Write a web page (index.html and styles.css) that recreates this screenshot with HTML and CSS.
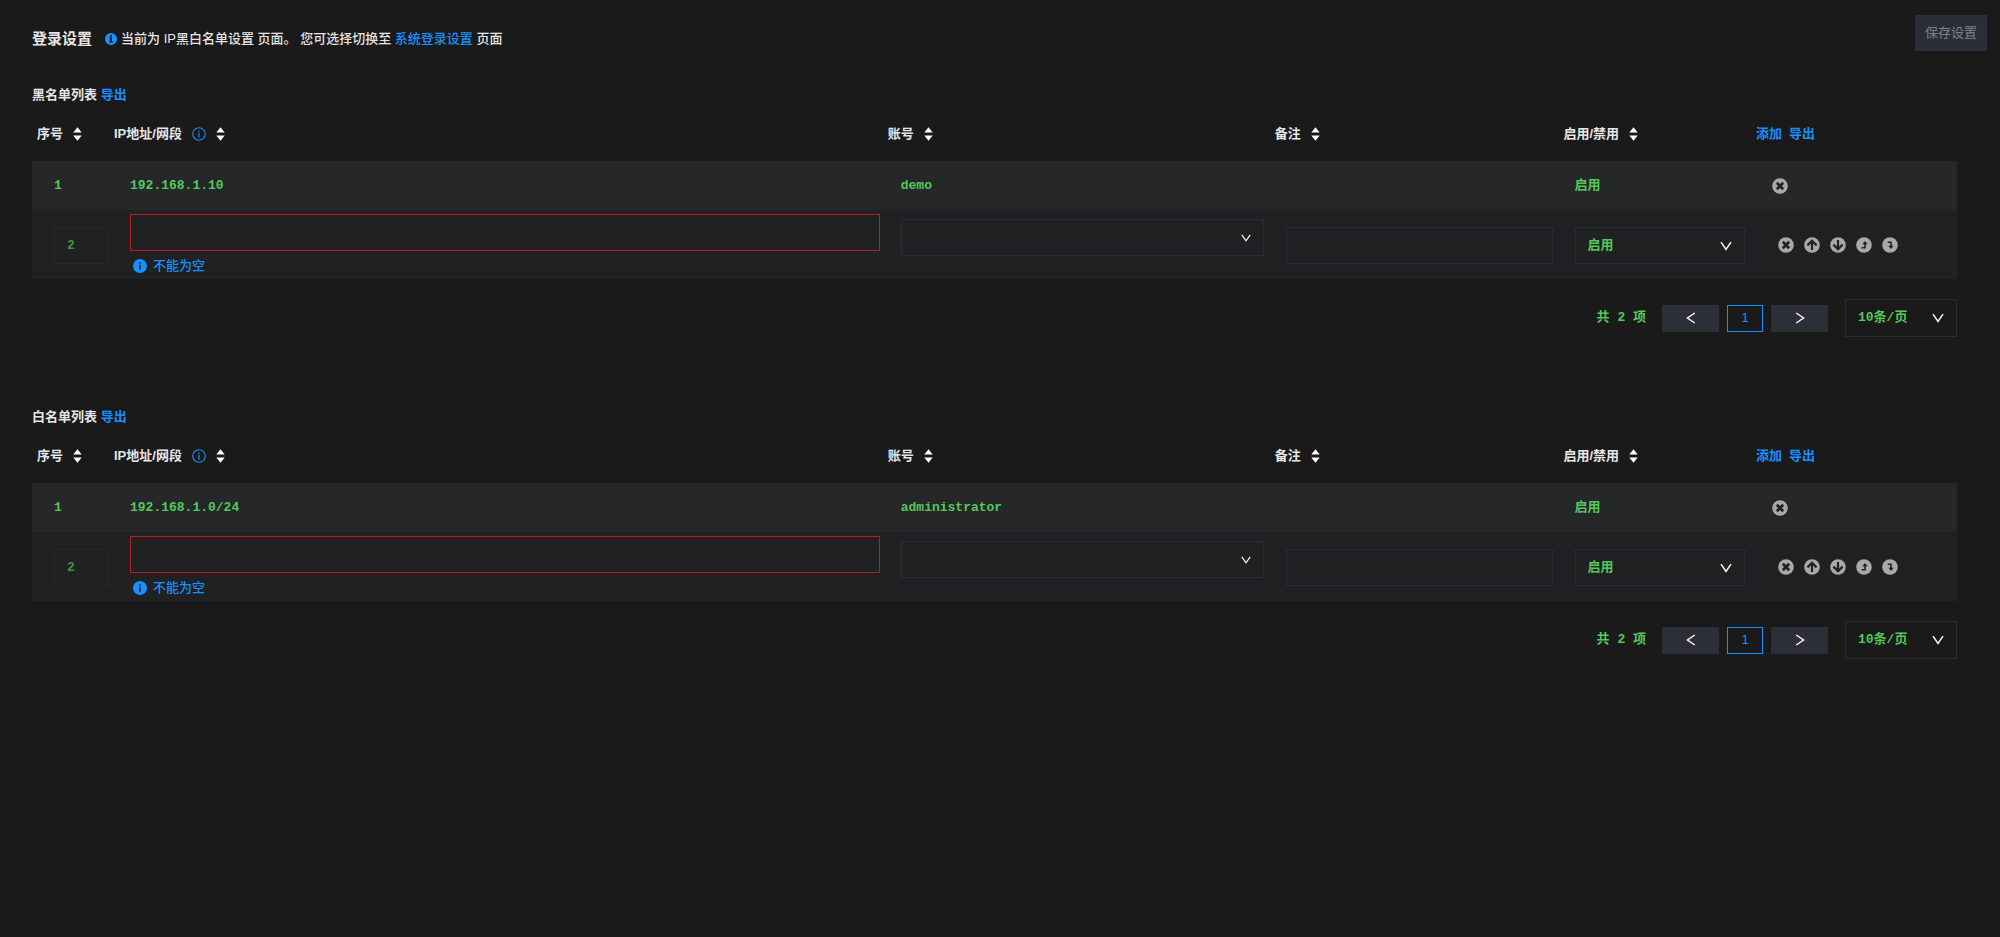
FILE: index.html
```
<!DOCTYPE html>
<html lang="zh-CN">
<head>
  <meta charset="UTF-8" />
  <meta name="viewport" content="width=device-width, initial-scale=1.0"/>
  <title>登录设置</title>
  <link rel="stylesheet" href="styles.css">
</head>
<body>
  <!-- Shared icons -->
  <svg class="icon-defs" aria-hidden="true">
    <symbol id="sort" viewBox="0 0 9 14">
      <path fill="currentColor" d="M4.5 0.3 8.7 5.6H0.3zM0.3 8.4H8.7L4.5 13.7z"/>
    </symbol>
    <symbol id="info" viewBox="0 0 14 14">
      <circle cx="7" cy="7" r="6.3" fill="none" stroke="currentColor" stroke-width="1.1"/>
      <path fill="currentColor" d="M6.4 3.7h1.2v1.2H6.4zM6.4 6h1.2v4.4H6.4z"/>
    </symbol>
    <symbol id="info-fill" viewBox="0 0 14 14">
      <circle cx="7" cy="7" r="7" fill="currentColor"/>
      <path fill="#202123" d="M6.3 3.2h1.5v1.5H6.3zM6.3 5.8h1.5v5H6.3z"/>
    </symbol>
    <symbol id="info-bold" viewBox="0 0 12 12">
      <circle cx="6" cy="6" r="6" fill="currentColor"/>
      <path fill="#1a1a1a" d="M5 2h2v1.7H5zM4.3 4.6H7v3.6h.8v1.4H4.3V8.2H5V6h-.7z"/>
    </symbol>
    <symbol id="down" viewBox="0 0 12 12">
      <path fill="none" stroke="currentColor" stroke-width="1.4" d="M1 2.2 6 9.4 11 2.2"/>
    </symbol>
    <symbol id="left" viewBox="0 0 12 12">
      <path fill="none" stroke="currentColor" stroke-width="1.4" d="M9.8 1 2.4 6l7.4 5"/>
    </symbol>
    <symbol id="right" viewBox="0 0 12 12">
      <path fill="none" stroke="currentColor" stroke-width="1.4" d="M2.2 1 9.6 6l-7.4 5"/>
    </symbol>
    <symbol id="remove" viewBox="0 0 16 16">
      <circle cx="8" cy="8" r="7.8" fill="#a9a9a9"/>
      <path stroke="#202123" stroke-width="2.7" d="M4.8 4.8l6.4 6.4M11.2 4.8l-6.4 6.4"/>
    </symbol>
    <symbol id="up-circle" viewBox="0 0 16 16">
      <circle cx="8" cy="8" r="7.8" fill="#a9a9a9"/>
      <path fill="none" stroke="#202123" stroke-width="2.2" d="M8 13V4M3.4 8.4 8 3.8l4.6 4.6"/>
    </symbol>
    <symbol id="down-circle" viewBox="0 0 16 16">
      <circle cx="8" cy="8" r="7.8" fill="#a9a9a9"/>
      <path fill="none" stroke="#202123" stroke-width="2.2" d="M8 3v9M3.4 7.6 8 12.2l4.6-4.6"/>
    </symbol>
    <symbol id="top-circle" viewBox="0 0 16 16">
      <circle cx="8" cy="8" r="7.8" fill="#a9a9a9"/>
      <path fill="#202123" d="M9 4l2.7 3.2H9.8v4.3H5.7V9.9h2.5V7.2H6.3z"/>
    </symbol>
    <symbol id="bottom-circle" viewBox="0 0 16 16">
      <circle cx="8" cy="8" r="7.8" fill="#a9a9a9"/>
      <path fill="#202123" d="M9 12l2.7-3.2H9.8V4.5H5.7v1.6h2.5v2.7H6.3z"/>
    </symbol>
  </svg>

  <header class="page-header">
    <div class="page-title">
      <h1>登录设置</h1>
      <p>
        <svg class="icon-sm"><use href="#info-bold"/></svg>
        <span>当前为 IP黑白名单设置 页面。&nbsp;您可选择切换至 <a href="#">系统登录设置</a> 页面</span>
      </p>
    </div>
    <button class="save-btn" type="button" disabled>保存设置</button>
  </header>

  <main>
    <!-- Blacklist -->
    <section class="list">
      <h2>黑名单列表 <a href="#">导出</a></h2>
      <table>
        <colgroup>
          <col class="col-index"><col class="col-ip"><col class="col-account"><col class="col-remark"><col class="col-status"><col class="col-actions">
        </colgroup>
        <thead>
          <tr>
            <th><div class="head">序号 <svg class="sort"><use href="#sort"/></svg></div></th>
            <th><div class="head">IP地址/网段 <svg class="icon"><use href="#info"/></svg><svg class="sort"><use href="#sort"/></svg></div></th>
            <th><div class="head">账号 <svg class="sort"><use href="#sort"/></svg></div></th>
            <th><div class="head">备注 <svg class="sort"><use href="#sort"/></svg></div></th>
            <th><div class="head">启用/禁用 <svg class="sort"><use href="#sort"/></svg></div></th>
            <th><div class="head-links"><a href="#">添加</a><a href="#">导出</a></div></th>
          </tr>
        </thead>
        <tbody>
          <tr class="row-view">
            <td class="cell-index">1</td>
            <td class="cell-ip">192.168.1.10</td>
            <td class="cell-account">demo</td>
            <td class="cell-remark"></td>
            <td class="cell-status">启用</td>
            <td class="cell-actions">
              <div class="actions"><button type="button" aria-label="删除"><svg><use href="#remove"/></svg></button></div>
            </td>
          </tr>
          <tr class="row-edit">
            <td class="cell-index"><input class="field" type="text" value="2" aria-label="序号" disabled></td>
            <td class="cell-ip">
              <input class="field error" type="text" aria-label="IP地址/网段">
              <p class="tip"><svg class="icon"><use href="#info-fill"/></svg>不能为空</p>
            </td>
            <td class="cell-account">
              <div class="select account-select">
                <select class="field" aria-label="账号"><option></option></select>
                <svg class="arrow small"><use href="#down"/></svg>
              </div>
            </td>
            <td class="cell-remark"><input class="field" type="text" aria-label="备注"></td>
            <td class="cell-status">
              <div class="select">
                <select class="field" aria-label="启用/禁用"><option>启用</option><option>禁用</option></select>
                <svg class="arrow"><use href="#down"/></svg>
              </div>
            </td>
            <td class="cell-actions">
              <div class="actions">
                <button type="button" aria-label="删除"><svg><use href="#remove"/></svg></button>
                <button type="button" aria-label="上移"><svg><use href="#up-circle"/></svg></button>
                <button type="button" aria-label="下移"><svg><use href="#down-circle"/></svg></button>
                <button type="button" aria-label="置顶"><svg><use href="#top-circle"/></svg></button>
                <button type="button" aria-label="置底"><svg><use href="#bottom-circle"/></svg></button>
              </div>
            </td>
          </tr>
        </tbody>
      </table>
      <nav class="pagination" aria-label="黑名单分页">
        <span class="total">共 2 项</span>
        <button class="step" type="button" aria-label="上一页"><svg class="icon-sm"><use href="#left"/></svg></button>
        <button class="page" type="button">1</button>
        <button class="step" type="button" aria-label="下一页"><svg class="icon-sm"><use href="#right"/></svg></button>
        <div class="select page-size">
          <select class="field" aria-label="每页条数"><option>10条/页</option><option>20条/页</option></select>
          <svg class="arrow"><use href="#down"/></svg>
        </div>
      </nav>
    </section>

    <!-- Whitelist -->
    <section class="list">
      <h2>白名单列表 <a href="#">导出</a></h2>
      <table>
        <colgroup>
          <col class="col-index"><col class="col-ip"><col class="col-account"><col class="col-remark"><col class="col-status"><col class="col-actions">
        </colgroup>
        <thead>
          <tr>
            <th><div class="head">序号 <svg class="sort"><use href="#sort"/></svg></div></th>
            <th><div class="head">IP地址/网段 <svg class="icon"><use href="#info"/></svg><svg class="sort"><use href="#sort"/></svg></div></th>
            <th><div class="head">账号 <svg class="sort"><use href="#sort"/></svg></div></th>
            <th><div class="head">备注 <svg class="sort"><use href="#sort"/></svg></div></th>
            <th><div class="head">启用/禁用 <svg class="sort"><use href="#sort"/></svg></div></th>
            <th><div class="head-links"><a href="#">添加</a><a href="#">导出</a></div></th>
          </tr>
        </thead>
        <tbody>
          <tr class="row-view">
            <td class="cell-index">1</td>
            <td class="cell-ip">192.168.1.0/24</td>
            <td class="cell-account">administrator</td>
            <td class="cell-remark"></td>
            <td class="cell-status">启用</td>
            <td class="cell-actions">
              <div class="actions"><button type="button" aria-label="删除"><svg><use href="#remove"/></svg></button></div>
            </td>
          </tr>
          <tr class="row-edit">
            <td class="cell-index"><input class="field" type="text" value="2" aria-label="序号" disabled></td>
            <td class="cell-ip">
              <input class="field error" type="text" aria-label="IP地址/网段">
              <p class="tip"><svg class="icon"><use href="#info-fill"/></svg>不能为空</p>
            </td>
            <td class="cell-account">
              <div class="select account-select">
                <select class="field" aria-label="账号"><option></option></select>
                <svg class="arrow small"><use href="#down"/></svg>
              </div>
            </td>
            <td class="cell-remark"><input class="field" type="text" aria-label="备注"></td>
            <td class="cell-status">
              <div class="select">
                <select class="field" aria-label="启用/禁用"><option>启用</option><option>禁用</option></select>
                <svg class="arrow"><use href="#down"/></svg>
              </div>
            </td>
            <td class="cell-actions">
              <div class="actions">
                <button type="button" aria-label="删除"><svg><use href="#remove"/></svg></button>
                <button type="button" aria-label="上移"><svg><use href="#up-circle"/></svg></button>
                <button type="button" aria-label="下移"><svg><use href="#down-circle"/></svg></button>
                <button type="button" aria-label="置顶"><svg><use href="#top-circle"/></svg></button>
                <button type="button" aria-label="置底"><svg><use href="#bottom-circle"/></svg></button>
              </div>
            </td>
          </tr>
        </tbody>
      </table>
      <nav class="pagination" aria-label="白名单分页">
        <span class="total">共 2 项</span>
        <button class="step" type="button" aria-label="上一页"><svg class="icon-sm"><use href="#left"/></svg></button>
        <button class="page" type="button">1</button>
        <button class="step" type="button" aria-label="下一页"><svg class="icon-sm"><use href="#right"/></svg></button>
        <div class="select page-size">
          <select class="field" aria-label="每页条数"><option>10条/页</option><option>20条/页</option></select>
          <svg class="arrow"><use href="#down"/></svg>
        </div>
      </nav>
    </section>
  </main>
</body>
</html>
```
FILE: styles.css
```
* {
  box-sizing: border-box;
  margin: 0;
  padding: 0;
}

body {
  background: #1a1a1a;
  color: #e6e6e6;
  font-family: "Liberation Sans", "Noto Sans CJK SC", sans-serif;
  font-size: 13px;
  font-weight: 500;
  line-height: 20px;
}

a {
  color: #1890ff;
  text-decoration: none;
}

button {
  border: none;
  cursor: pointer;
  font: inherit;
}

svg {
  display: block;
  flex: none;
}

.icon-defs {
  display: none;
}

.icon {
  width: 14px;
  height: 14px;
}

.icon-sm {
  width: 12px;
  height: 12px;
}

/* Page header */
.page-header {
  display: flex;
  justify-content: space-between;
  align-items: flex-start;
  padding: 15px 13px 0 32px;
}

.page-title {
  display: flex;
  align-items: center;
  gap: 13px;
  padding-top: 14px;
}

.page-title h1 {
  font-size: 15px;
  font-weight: 700;
}

.page-title p {
  display: flex;
  align-items: center;
  gap: 4px;
}

.page-title .icon-sm {
  color: #1890ff;
}

.save-btn {
  height: 36px;
  padding: 0 10px;
  background: #2b2e36;
  color: #7c838e;
  font-weight: 400;
}

/* Lists */
main {
  padding: 34px 43px 0 32px;
}

.list {
  margin-bottom: 70px;
}

.list h2 {
  font-size: 13px;
  font-weight: 700;
  margin-bottom: 2px;
}

table {
  width: 100%;
  border-collapse: collapse;
  table-layout: fixed;
}

.col-index {
  width: 77px;
}

.col-account {
  width: 387px;
}

.col-remark {
  width: 15%;
}

.col-status {
  width: 10%;
}

.col-actions {
  width: 206px;
}

th {
  height: 54px;
  padding: 0 5px;
  font-weight: 700;
  text-align: left;
}

.head {
  display: flex;
  align-items: center;
  gap: 10px;
}

.head .icon {
  color: #1890ff;
}

.head-links {
  display: flex;
  gap: 7px;
}

.sort {
  width: 9px;
  height: 14px;
  color: #fff;
}

td {
  color: #55c75b;
  font-family: "Liberation Mono", "Noto Sans CJK SC", monospace;
  font-weight: 700;
  vertical-align: middle;
}

.row-view td {
  height: 49px;
  background: #252729;
}

.row-edit td {
  height: 69px;
  background: #202123;
}

.cell-index {
  padding-left: 22px;
}

.cell-ip {
  padding-left: 21px;
  padding-right: 3px;
}

.cell-account {
  padding-left: 18px;
  padding-right: 6px;
}

.cell-remark,
.cell-status {
  padding-left: 16px;
  padding-right: 6px;
}

.row-edit .cell-index,
.row-edit .cell-remark,
.row-edit .cell-status {
  padding-top: 2px;
}

.cell-actions {
  padding-left: 21px;
}

.row-edit .cell-actions {
  padding-left: 27px;
}

/* Form fields */
.field {
  display: block;
  width: 100%;
  height: 37px;
  padding: 0 12px;
  background: transparent;
  border: 1px solid #2b2c31;
  border-radius: 0;
  color: #55c75b;
  font-family: "Liberation Mono", "Noto Sans CJK SC", monospace;
  font-size: 13px;
  font-weight: 700;
  outline: none;
  appearance: none;
}

.field:disabled {
  border-color: #27282a;
  color: #459049;
  opacity: 1;
}

.field.error {
  border-color: #b71d24;
}

.tip {
  display: flex;
  align-items: center;
  gap: 6px;
  padding: 6px 0 0 3px;
  color: #1890ff;
  font-family: "Liberation Sans", "Noto Sans CJK SC", sans-serif;
  font-weight: 500;
  line-height: 18px;
}

.select {
  display: grid;
  align-items: center;
}

.select .field,
.select .arrow {
  grid-area: 1 / 1;
}

.arrow {
  width: 12px;
  height: 12px;
  margin-right: 13px;
  justify-self: end;
  color: #fff;
  pointer-events: none;
}

.arrow.small {
  width: 10px;
  height: 10px;
}

.account-select {
  margin-bottom: 14px;
}

.actions {
  display: flex;
  align-items: center;
  gap: 10px;
}

.actions button {
  width: 16px;
  height: 16px;
  background: none;
}

.actions svg {
  width: 16px;
  height: 16px;
}

/* Pagination */
.pagination {
  display: flex;
  justify-content: flex-end;
  align-items: center;
  gap: 8px;
  margin-top: 20px;
}

.total {
  margin-right: 8px;
  color: #55c75b;
  font-family: "Liberation Mono", "Noto Sans CJK SC", monospace;
  font-weight: 700;
}

.step {
  display: flex;
  align-items: center;
  justify-content: center;
  width: 57px;
  height: 27px;
  background: #2c2f38;
  color: #fff;
}

.page {
  width: 36px;
  height: 27px;
  background: transparent;
  border: 1px solid #1890ff;
  color: #1890ff;
}

.page-size {
  width: 112px;
  margin-left: 9px;
}

.page-size .field {
  height: 38px;
  padding-bottom: 2px;
}
```
